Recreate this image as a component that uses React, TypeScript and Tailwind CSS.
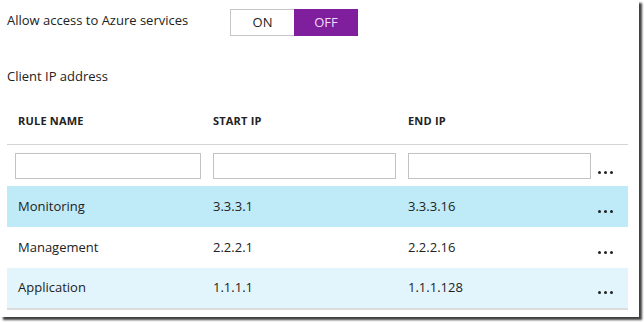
import React from 'react';

interface Rule {
  name: string;
  start: string;
  end: string;
  bg: string;
}

const rules: Rule[] = [
  { name: 'Monitoring', start: '3.3.3.1', end: '3.3.3.16', bg: 'bg-[#bfeaf7] h-[41px]' },
  { name: 'Management', start: '2.2.2.1', end: '2.2.2.16', bg: 'bg-white h-[41px]' },
  { name: 'Application', start: '1.1.1.1', end: '1.1.1.128', bg: 'bg-[#e3f5fc] h-[40px]' },
];

const Dots = () => (
  <div className="flex gap-[3px] items-center">
    <span className="w-[3px] h-[3px] rounded-full bg-[#222]" />
    <span className="w-[3px] h-[3px] rounded-full bg-[#222]" />
    <span className="w-[3px] h-[3px] rounded-full bg-[#222]" />
  </div>
);

const App = () => {
  return (
    <div className="w-[644px] h-[322px] bg-white font-['Open_Sans',sans-serif] text-[#222]">
      <div className="w-[639px] h-[317px] bg-white shadow-[3px_3px_2px_rgba(0,0,0,0.75)]">
        {/* Azure services toggle */}
        <div className="flex items-center pt-[9px] pl-[7px]">
          <span className="w-[223px] text-[13px] -mt-[3px]">Allow access to Azure services</span>
          <div className="flex h-[27px] text-[13px]">
            <div className="w-[64px] flex items-center justify-center border border-[#c6c6c6] border-r-0 bg-white">
              ON
            </div>
            <div className="w-[64px] flex items-center justify-center bg-[#7f1f9e] text-[#f3dcfa]">
              OFF
            </div>
          </div>
        </div>

        <div className="pl-[7px] mt-[30px] text-[13px] leading-[20px]">Client IP address</div>

        {/* Firewall rules */}
        <div className="ml-[7px] w-[621px] mt-[24px]">
          <div className="flex items-center h-[23px] pl-[11px] text-[11px] font-bold tracking-[0.2px]">
            <span className="w-[195px]">RULE NAME</span>
            <span className="w-[195px]">START IP</span>
            <span>END IP</span>
          </div>
          <div className="border-b border-[#d4d4d4] mt-[11px]" />
          <div className="flex items-end pl-[8px] pt-[8px] pb-[7px]">
            <input className="w-[186px] h-[26px] border border-[#c2c2c2] outline-none" />
            <input className="ml-[12px] w-[183px] h-[26px] border border-[#c2c2c2] outline-none" />
            <input className="ml-[12px] w-[183px] h-[26px] border border-[#c2c2c2] outline-none" />
            <div className="ml-[7px] mb-[5px]">
              <Dots />
            </div>
          </div>
          {rules.map((r) => (
            <div key={r.name} className={`flex items-center pl-[11px] text-[13px] ${r.bg}`}>
              <span className="w-[195px]">{r.name}</span>
              <span className="w-[195px]">{r.start}</span>
              <span className="w-[190px]">{r.end}</span>
              <div className="self-end mb-[14px]">
                <Dots />
              </div>
            </div>
          ))}
          <div className="border-b-2 border-[#dcdcdc]" />
        </div>
      </div>
    </div>
  );
};

export default App;
